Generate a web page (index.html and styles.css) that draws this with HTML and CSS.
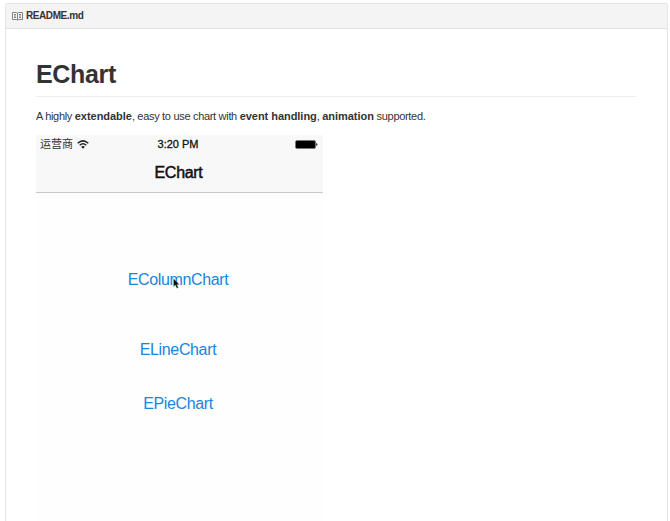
FILE: index.html
```html
<!DOCTYPE html>
<html lang="en">
<head>
<meta charset="utf-8">
<title>EChart README</title>
<link rel="stylesheet" href="styles.css">
</head>
<body>
<section class="readme">
  <header class="file-head">
    <svg class="book" viewBox="0 0 11 9" width="11" height="9" fill="none" stroke="#777">
      <path d="M.5 .5h4l1 .7 1-.7h4v7h-4l-1 .8-1-.8h-4zM5.5 1v7M2 2.5h2M2 4h2M2 5.5h2M7 2.5h2M7 4h2M7 5.5h2" stroke-width=".9"/>
    </svg>
    <span class="file-name">README.md</span>
  </header>
  <article class="content">
    <h1>EChart</h1>
    <p>A highly <b>extendable</b>, easy to use chart with <b>event handling</b>, <b>animation</b> supported.</p>
    <div class="phone">
      <div class="nav">
        <div class="status">
          <div class="carrier"><span>运营商</span>
            <svg class="wifi" viewBox="0 0 12 9" width="12" height="9" fill="none" stroke="#222" stroke-width="1.5">
              <path d="M.7 3.2Q6-1.5 11.3 3.2M2.7 5.3Q6 2.3 9.3 5.3"/><path d="M4.1 6.7Q6 5.2 7.9 6.7L6 8.8z" fill="#222" stroke="none"/>
            </svg>
          </div>
          <span class="time">3:20 PM</span>
          <svg class="battery" viewBox="0 0 23 9" width="23" height="9">
            <rect x=".5" y=".5" width="20" height="8" rx="1.5" fill="#000" stroke="#777"/><path d="M21.2 3q1.3.2 1.3 1.5T21.2 6z" fill="#222"/>
          </svg>
        </div>
        <div class="title">EChart</div>
      </div>
      <nav class="links">
        <a class="column">EColumnChart
          <svg class="cursor" viewBox="0 0 7 11" width="7" height="11"><path d="M.5.5v8.2l1.8-1.6 1.5 3.2 1.5-.7-1.4-3h2.5z" fill="#111" stroke="#bbb" stroke-width=".4"/></svg>
        </a>
        <a class="line">ELineChart</a>
        <a class="pie">EPieChart</a>
      </nav>
    </div>
  </article>
</section>
</body>
</html>
```
FILE: styles.css
```css
* { box-sizing: border-box; }
body {
  margin: 0;
  padding: 3px 2px 0 5px;
  height: 521px;
  overflow: hidden;
  background: #fff;
  color: #333;
  font-family: "Liberation Sans", Arial, "Noto Sans CJK SC", sans-serif;
}
.readme {
  height: 530px;
  border: 1px solid #e4e4e4;
  border-radius: 2px 2px 0 0;
}
.file-head {
  display: flex;
  align-items: center;
  gap: 3px;
  height: 25px;
  padding-left: 6px;
  background: #f4f4f4;
  border-bottom: 1px solid #e1e1e1;
}
.file-name { font-size: 10px; font-weight: bold; line-height: 12px; letter-spacing: -.42px; }
.content { padding: 30px 31px 0 30px; }
h1 {
  margin: 0;
  height: 38px;
  border-bottom: 1px solid #eee;
  font-size: 25px;
  line-height: 30px;
  letter-spacing: -.35px;
}
p { margin: 12px 0 0; font-size: 11px; line-height: 15px; letter-spacing: -.31px; white-space: nowrap; }
p b { letter-spacing: -.04px; }
.phone { width: 287px; height: 400px; margin-top: 11px; background: #fefefe; }
.nav { height: 58px; background: #f8f8f8; border-bottom: 1px solid #c8c8c8; color: #111; }
.status {
  display: grid;
  grid-template-columns: 1fr auto 1fr;
  align-items: center;
  height: 18px;
  padding: 0 5px 0 4px;
}
.carrier { display: flex; align-items: center; gap: 4px; font-size: 11px; line-height: 16px; color: #333; }
.time { margin-right: 2px; font-size: 11px; line-height: 16px; -webkit-text-stroke: .3px #111; }
.battery { justify-self: end; }
.title {
  padding: 10px 2px 0 0;
  text-align: center;
  font-size: 16px;
  line-height: 20px;
  letter-spacing: -.3px;
  -webkit-text-stroke: .5px #111;
}
.links { display: flex; flex-direction: column; align-items: center; padding-right: 3px; color: #1985dc; font-size: 16px; line-height: 20px; letter-spacing: -.36px; }
.column { position: relative; margin-top: 77px; }
.line { margin-top: 50px; }
.pie { margin-top: 34px; }
.cursor { position: absolute; left: 45px; top: 8px; }
```
